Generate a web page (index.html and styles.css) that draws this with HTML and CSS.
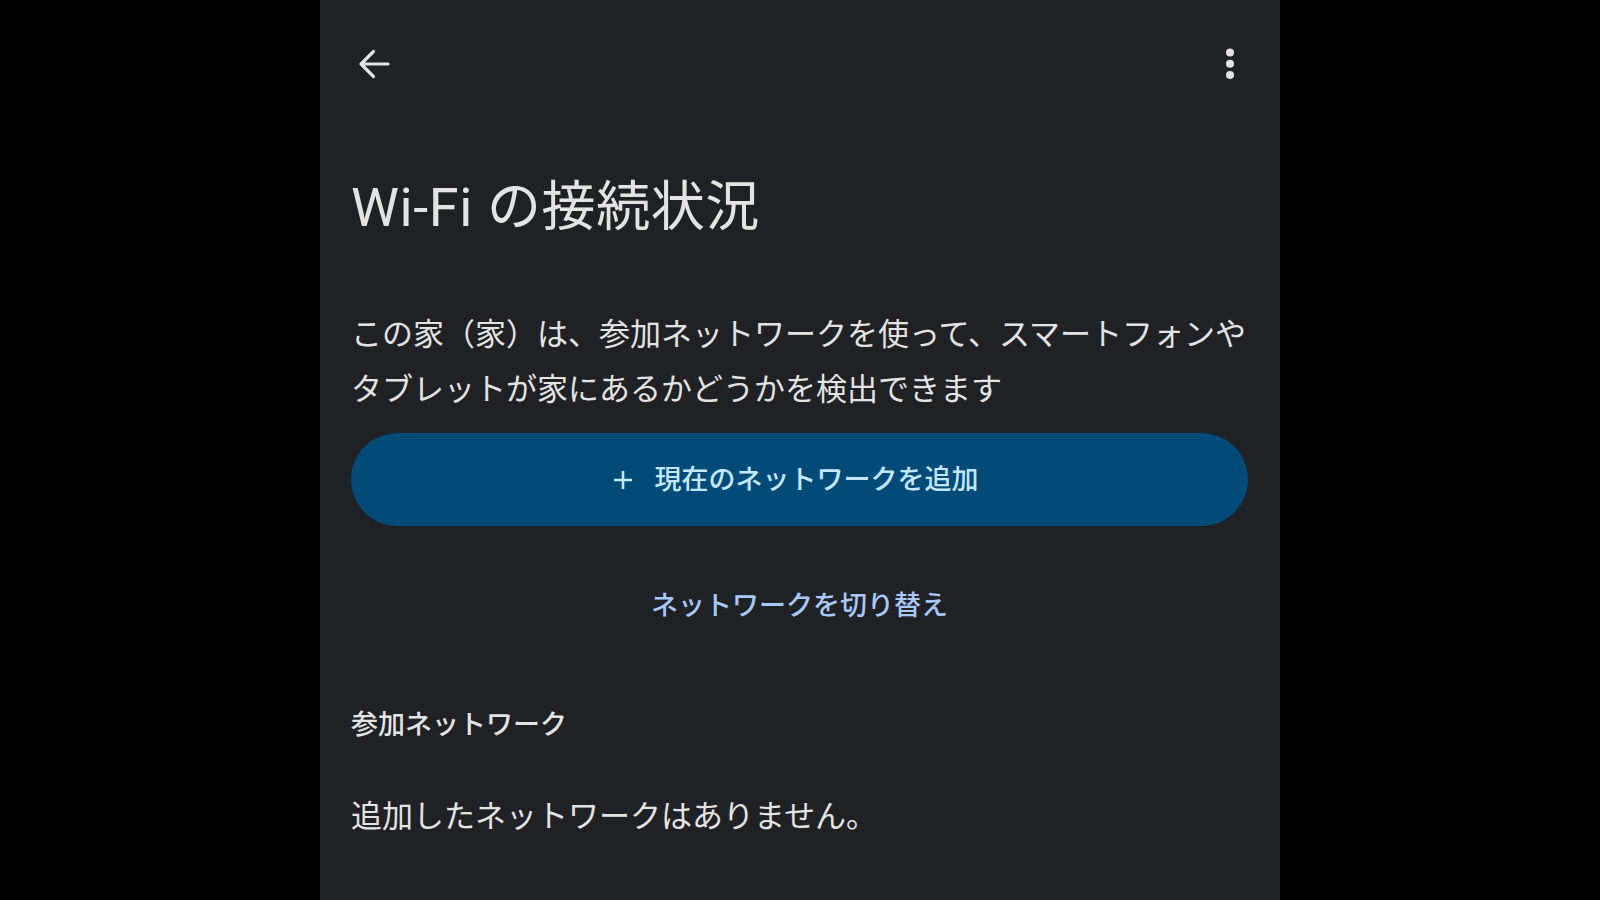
FILE: index.html
```html
<!DOCTYPE html>
<html lang="ja">
<head>
<meta charset="utf-8">
<title>Wi-Fi の接続状況</title>
<link rel="stylesheet" href="styles.css">
</head>
<body>
<div class="screen">
  <div class="topbar">
    <div class="icon-btn">
      <svg width="32" height="32" viewBox="0 0 32 32" aria-hidden="true">
        <path d="M30 16H3M15.5 3.5L3 16l12.5 12.5" fill="none" stroke="#e3e3e3" stroke-width="3.2" stroke-linecap="round" stroke-linejoin="round"/>
      </svg>
    </div>
    <div class="icon-btn">
      <svg width="48" height="48" viewBox="0 0 48 48" aria-hidden="true">
        <circle cx="24" cy="12.5" r="4" fill="#e3e3e3"/>
        <circle cx="24" cy="23.8" r="4" fill="#e3e3e3"/>
        <circle cx="24" cy="35.1" r="4" fill="#e3e3e3"/>
      </svg>
    </div>
  </div>

  <h1 class="title">Wi-Fi の接続状況</h1>

  <p class="desc">この家（家）は、参加ネットワークを使って、スマートフォンやタブレットが家にあるかどうかを検出できます</p>

  <div class="primary-btn">
    <svg class="plus" width="20" height="20" viewBox="0 0 20 20" aria-hidden="true">
      <path d="M10 1v18M1 10h18" stroke="#c2e7ff" stroke-width="2.6" fill="none"/>
    </svg>
    <span>現在のネットワークを追加</span>
  </div>

  <div class="link">ネットワークを切り替え</div>

  <h2 class="section">参加ネットワーク</h2>

  <p class="empty">追加したネットワークはありません。</p>
</div>
</body>
</html>
```

FILE: styles.css
```css
html, body {
  margin: 0;
  padding: 0;
  background: #000;
}

body {
  display: flex;
  justify-content: center;
  font-family: Roboto, "Noto Sans CJK JP", sans-serif;
  color: #e3e3e3;
}

.screen {
  width: 960px;
  height: 900px;
  box-sizing: border-box;
  padding: 0 32px 0 31px;
  background: #202124;
  overflow: hidden;
  display: flex;
  flex-direction: column;
}

.topbar {
  display: flex;
  justify-content: space-between;
  align-items: center;
  padding-top: 40px;
  height: 48px;
  margin: 0 -6px 0 -1px;
}

.icon-btn {
  width: 48px;
  height: 48px;
  display: flex;
  align-items: center;
  justify-content: center;
}

.title {
  margin: 88px 0 0 0;
  font-size: 54px;
  line-height: 64px;
  font-weight: 400;
  color: #e3e3e3;
  letter-spacing: 0.6px;
}

.desc {
  margin: 67px -8px 0 0;
  font-size: 31px;
  line-height: 55px;
  font-weight: 400;
  color: #e3e3e3;
}

.primary-btn {
  margin-top: 16px;
  height: 93px;
  border-radius: 47px;
  background: #004a77;
  color: #c2e7ff;
  display: flex;
  align-items: center;
  justify-content: center;
  gap: 22px;
  font-size: 27px;
  font-weight: 500;
  padding-right: 8px;
}

.primary-btn span {
  line-height: 40px;
}

.link {
  margin-top: 60px;
  text-align: center;
  font-size: 27px;
  line-height: 40px;
  font-weight: 500;
  color: #a8c7fa;
}

.section {
  margin: 79px 0 0 0;
  font-size: 27px;
  line-height: 40px;
  font-weight: 500;
  color: #e3e3e3;
}

.empty {
  margin: 50px 0 0 0;
  font-size: 31px;
  line-height: 44px;
  font-weight: 400;
  color: #e3e3e3;
}
```
